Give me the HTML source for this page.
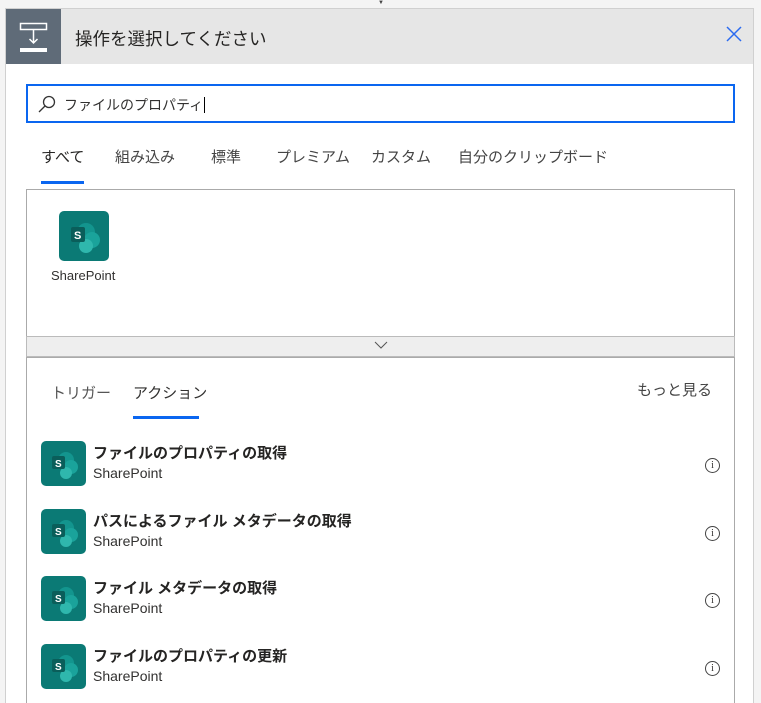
<!DOCTYPE html>
<html><head><meta charset="utf-8"><style>
body{margin:0;width:761px;height:703px;background:#f4f4f4;font-family:"Liberation Sans","Noto Sans CJK JP",sans-serif;overflow:hidden;position:relative;color:#323130}
.card{position:absolute;left:5px;top:8px;width:749px;height:695px;background:#fff;border:1px solid #d0d0d0;border-bottom:none;box-sizing:border-box;overflow:hidden}
.hdr{position:absolute;left:0;top:0;right:0;height:55px;background:#e6e6e6}
.hic{position:absolute;left:0;top:0;width:55px;height:55px;background:#5f6b78}
.ttl{position:absolute;left:69px;top:17px;font-size:17.5px;color:#252423}
.x{position:absolute;right:10px;top:16px}
.search{position:absolute;left:20px;top:75px;width:709px;height:39px;border:2px solid #0a66f0;box-sizing:border-box}
.search span{position:absolute;left:36px;top:9px;font-size:14px}
.tabs{position:absolute;top:137px;font-size:15px;color:#444}
.ul{position:absolute;height:3px;background:#0a66f0}
.box{position:absolute;left:20px;width:709px;border:1px solid #aaa;box-sizing:border-box;background:#fff}
.sp{position:absolute;border-radius:5px;background:#0b7a75;overflow:hidden}
.row{position:absolute;left:41px}
.rt{position:absolute;left:52px;top:0;font-size:15px;font-weight:bold;white-space:nowrap;color:#252423}
.rs{position:absolute;left:52px;top:24px;font-size:14px;color:#323130}
.info{position:absolute;width:13px;height:13px;border:1px solid #444;border-radius:50%;font-size:10px;text-align:center;line-height:13px;font-family:"Liberation Serif",serif}
</style></head><body>
<div style="position:absolute;left:378px;top:0;font-size:6px;color:#444">▼</div>
<div class="card">
<div class="hdr"><div class="hic"><svg width="55" height="55"><rect x="14.5" y="14.5" width="26" height="6" fill="none" stroke="#fff" stroke-width="1.5"/><rect x="14" y="39" width="27" height="4" fill="#fff"/><path d="M27.5 21v13M23.5 30l4 4 4-4" fill="none" stroke="#fff" stroke-width="1.5"/></svg></div>
<div class="ttl">操作を選択してください</div>
<svg class="x" width="18" height="18"><path d="M2 2l14 14M16 2L2 16" stroke="#2b6bf0" stroke-width="1.5"/></svg></div>
<div class="search"><svg style="position:absolute;left:10px;top:9px" width="18" height="18"><circle cx="11" cy="7" r="5.5" fill="none" stroke="#333" stroke-width="1.3"/><path d="M7 11l-6 6" stroke="#333" stroke-width="1.3"/></svg><span>ファイルのプロパティ<span style="position:static;border-left:1px solid #000;margin-left:1px"></span></span></div>
<div class="tabs" style="left:35px;color:#252423">すべて</div>
<div class="tabs" style="left:109px">組み込み</div>
<div class="tabs" style="left:205px">標準</div>
<div class="tabs" style="left:270px">プレミアム</div>
<div class="tabs" style="left:365px">カスタム</div>
<div class="tabs" style="left:452px">自分のクリップボード</div>
<div class="ul" style="left:35px;top:172px;width:43px"></div>
<div class="box" style="top:180px;height:148px">
<div class="sp" style="left:32px;top:21px;width:50px;height:50px"><svg width="50" height="50"><circle cx="27" cy="21" r="9" fill="#13958e"/><circle cx="33" cy="29" r="8" fill="#1aa39b"/><circle cx="27" cy="35" r="7" fill="#2fb7ad"/><rect x="12" y="16" width="14" height="15" rx="2" fill="#0a5e5a"/><text x="15" y="28" font-size="11" font-weight="bold" fill="#fff" font-family="Liberation Sans">S</text></svg></div>
<div style="position:absolute;left:24px;top:78px;font-size:13px">SharePoint</div></div>
<div style="position:absolute;left:20px;top:327px;width:709px;height:21px;background:#eee;border:1px solid #bbb;box-sizing:border-box"><svg style="position:absolute;left:347px;top:4px" width="14" height="9"><path d="M1 1l6 6 6-6" fill="none" stroke="#555" stroke-width="1"/></svg></div>
<div class="box" style="top:348px;height:360px;border-bottom:none">
<div style="position:absolute;left:24px;top:24px;font-size:15px;color:#555">トリガー</div>
<div style="position:absolute;left:106px;top:24px;font-size:15px">アクション</div>
<div class="ul" style="left:106px;top:58px;width:66px"></div>
<div style="position:absolute;left:610px;top:21px;font-size:15px;color:#444">もっと見る</div>
</div>
</div>
<div id="rows"></div>
<script>
var d=[["ファイルのプロパティの取得",441],["パスによるファイル メタデータの取得",509],["ファイル メタデータの取得",576],["ファイルのプロパティの更新",644]];
var h="";d.forEach(function(r){h+='<div class="row" style="top:'+(r[1])+'px"><div class="sp" style="left:0;top:0;width:45px;height:45px"><svg width="45" height="45"><circle cx="25" cy="19" r="8" fill="#13958e"/><circle cx="30" cy="26" r="7" fill="#1aa39b"/><circle cx="25" cy="32" r="6" fill="#2fb7ad"/><rect x="11" y="15" width="13" height="13" rx="2" fill="#0a5e5a"/><text x="14" y="26" font-size="10" font-weight="bold" fill="#fff" font-family="Liberation Sans">S</text></svg></div><div class="rt" style="top:1px">'+r[0]+'</div><div class="rs">SharePoint</div><div class="info" style="top:17px;left:664px">i</div></div>';});
document.getElementById("rows").innerHTML=h;
</script>
</body></html>
